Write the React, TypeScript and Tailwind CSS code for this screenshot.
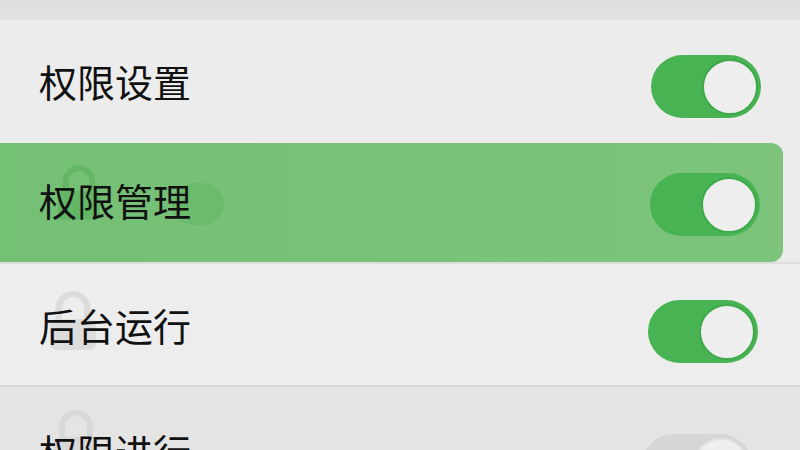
import React from 'react';

const font = { fontFamily: '"Noto Sans CJK SC", "Noto Sans", sans-serif' };

function Toggle({ faded = false }: { faded?: boolean }) {
  return (
    <div
      className={`flex h-[63px] w-[110px] items-center justify-end rounded-full pr-[3px] ${
        faded ? 'bg-[#d6d6d6]' : 'bg-[#47b352]'
      }`}
    >
      <div
        className={`h-[56px] w-[56px] rounded-full border-2 ${
          faded ? 'border-[#e2e2e2] bg-[#efefef]' : 'border-[#3fa94a] bg-[#eeeeee]'
        }`}
      />
    </div>
  );
}

function Lock({ className }: { className: string }) {
  return (
    <svg viewBox="0 0 48 60" className={className} fill="none">
      <path d="M10 28V18a14 14 0 0 1 28 0v10" stroke="currentColor" strokeWidth="6" />
      <rect x="2" y="28" width="44" height="30" rx="6" fill="currentColor" />
    </svg>
  );
}

interface RowProps {
  label: string;
  textOffset: string;
  toggleOffset: string;
  className: string;
  faded?: boolean;
  children?: React.ReactNode;
}

function Row({ label, textOffset, toggleOffset, className, faded, children }: RowProps) {
  return (
    <div className={`relative flex items-start justify-between pl-[39px] ${className}`}>
      {children}
      <span className={`relative text-[38px] leading-none text-[#111] ${textOffset}`}>{label}</span>
      <div className={toggleOffset}>
        <Toggle faded={faded} />
      </div>
    </div>
  );
}

export default function App() {
  return (
    <div className="flex h-[450px] w-[800px] flex-col overflow-hidden bg-[#ebebeb]" style={font}>
      {/* top band */}
      <div className="h-[20px] shrink-0 bg-gradient-to-b from-[#dcdcdc] to-[#e4e4e4]" />

      <Row
        label="权限设置"
        textOffset="mt-[42px]"
        toggleOffset="mt-[35px]"
        className="h-[123px] shrink-0 bg-[#ececec] pr-[39px]"
      />

      {/* highlighted row */}
      <div className="h-[119px] shrink-0 pr-[17px]">
        <Row
          label="权限管理"
          textOffset="mt-[38px]"
          toggleOffset="mt-[30px]"
          className="h-full rounded-r-[12px] bg-gradient-to-r from-[#74c075] to-[#7cc47c] pr-[23px]"
        >
          <Lock className="absolute left-[56px] top-[18px] h-[64px] w-[46px] text-[#5bb25f] opacity-70" />
          <div className="absolute left-[172px] top-[40px] h-[42px] w-[52px] rounded-full bg-[#66b868] opacity-60" />
        </Row>
      </div>

      <div className="h-[2px] shrink-0 bg-[#dddddd]" />
      <Row
        label="后台运行"
        textOffset="mt-[42px]"
        toggleOffset="mt-[36px]"
        className="h-[121px] shrink-0 bg-[#ededed] pr-[42px]"
      >
        <Lock className="absolute left-[48px] top-[26px] h-[62px] w-[50px] text-[#dcdcdc]" />
      </Row>

      <div className="h-[2px] shrink-0 bg-[#d9d9d9]" />
      <Row
        label="权限进行"
        textOffset="mt-[45px]"
        toggleOffset="mt-[47px]"
        faded
        className="flex-1 bg-[#e4e4e4] pr-[48px]"
      >
        <Lock className="absolute left-[52px] top-[22px] h-[60px] w-[48px] text-[#d8d8d8]" />
      </Row>
    </div>
  );
}
